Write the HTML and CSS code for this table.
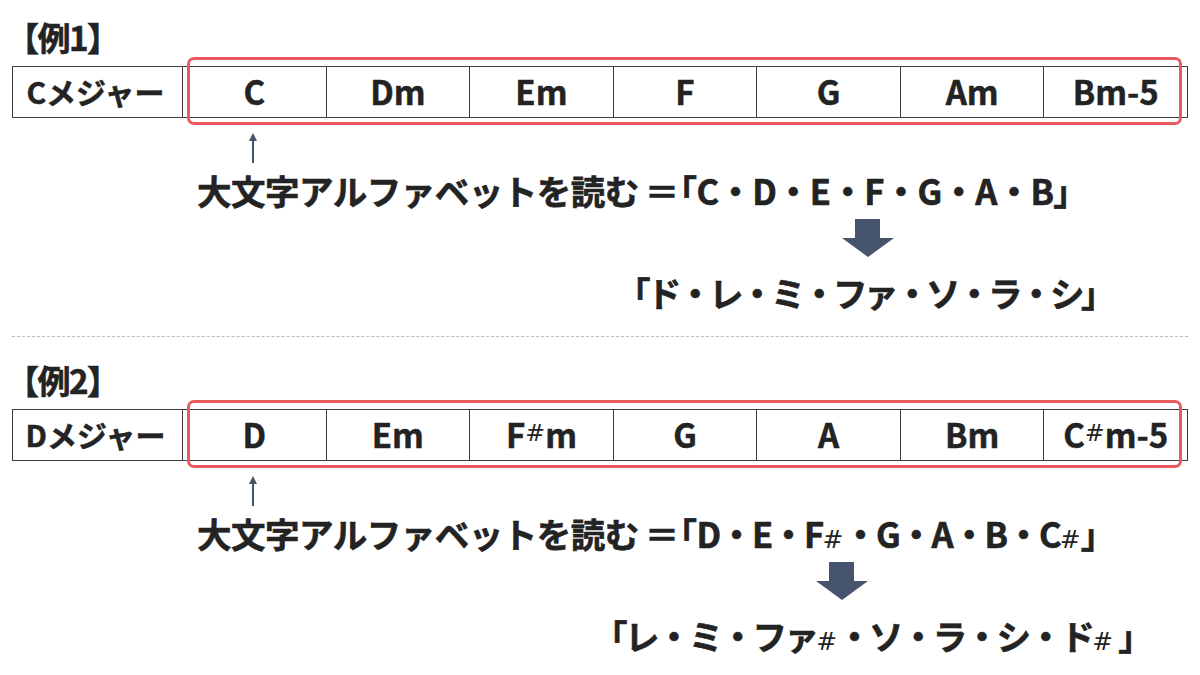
FILE: index.html
```html
<!DOCTYPE html>
<html lang="ja">
<head>
<meta charset="utf-8">
<title>コード譜の読み方</title>
<link rel="stylesheet" href="styles.css">
</head>
<body>
<div class="page">
  <section class="example">
    <h2 class="title">【例1】</h2>
    <div class="scale">
      <div class="cell key">Cメジャー</div>
      <div class="cell">C</div>
      <div class="cell">Dm</div>
      <div class="cell">Em</div>
      <div class="cell">F</div>
      <div class="cell">G</div>
      <div class="cell">Am</div>
      <div class="cell">Bm-5</div>
      <div class="highlight"></div>
    </div>
    <div class="pointer">
      <svg width="12" height="30" viewBox="0 0 12 30"><line x1="6" y1="6" x2="6" y2="30" stroke="#44546a" stroke-width="2"/><polygon points="2,8 6,0 10,8" fill="#44546a"/></svg>
    </div>
    <p class="rule"><span class="words">大文字アルファベットを読む</span><span class="eq">＝</span><span class="open">「</span><span class="notes">C・D・E・F・G・A・B」</span></p>
    <div class="down down-1">
      <svg width="52" height="38" viewBox="0 0 52 38"><polygon points="13,0 38,0 38,19 52,19 26,38 0,19 13,19" fill="#46556d"/></svg>
    </div>
    <p class="result result-1">「ド・レ・ミ・ファ・ソ・ラ・シ」</p>
  </section>

  <hr class="divider">

  <section class="example">
    <h2 class="title">【例2】</h2>
    <div class="scale">
      <div class="cell key">Dメジャー</div>
      <div class="cell">D</div>
      <div class="cell">Em</div>
      <div class="cell">F<span class="sharp">#</span>m</div>
      <div class="cell">G</div>
      <div class="cell">A</div>
      <div class="cell">Bm</div>
      <div class="cell">C<span class="sharp">#</span>m-5</div>
      <div class="highlight"></div>
    </div>
    <div class="pointer">
      <svg width="12" height="30" viewBox="0 0 12 30"><line x1="6" y1="6" x2="6" y2="30" stroke="#44546a" stroke-width="2"/><polygon points="2,8 6,0 10,8" fill="#44546a"/></svg>
    </div>
    <p class="rule"><span class="words">大文字アルファベットを読む</span><span class="eq">＝</span><span class="open">「</span><span class="notes notes-sharp">D・E・F<span class="sharp">#</span>・G・A・B・C<span class="sharp">#</span>」</span></p>
    <div class="down down-2">
      <svg width="52" height="38" viewBox="0 0 52 38"><polygon points="13,0 38,0 38,19 52,19 26,38 0,19 13,19" fill="#46556d"/></svg>
    </div>
    <p class="result result-2">「レ・ミ・ファ<span class="sharp">#</span>・ソ・ラ・シ・ド<span class="sharp">#</span> 」</p>
  </section>
</div>
</body>
</html>
```

FILE: styles.css
```css
* { box-sizing: border-box; }

html, body {
  margin: 0;
  padding: 0;
  background: #ffffff;
}

body {
  font-family: "Noto Sans CJK JP", "Noto Sans", sans-serif;
  color: #232323;
  width: 1200px;
  height: 675px;
  overflow: hidden;
}

.page {
  padding: 17px 12px 0 12px;
}

.example {
  display: flex;
  flex-direction: column;
}

.title {
  margin: 0;
  font-size: 33px;
  font-weight: 700;
  line-height: 40px;
  height: 40px;
  margin-left: -6px;
  letter-spacing: -1.5px;
  -webkit-text-stroke: 0.6px #232323;
}

.scale {
  position: relative;
  margin-top: 9px;
  display: grid;
  grid-template-columns: 169px repeat(7, 1fr);
  height: 52px;
  border: 1.5px solid #3d3d3d;
}

.cell {
  display: flex;
  align-items: center;
  justify-content: center;
  font-size: 33px;
  font-weight: 700;
  line-height: 1;
  border-left: 1.5px solid #3d3d3d;
  padding-bottom: 2px;
  -webkit-text-stroke: 0.5px #232323;
}

.cell.key {
  border-left: none;
  font-size: 30px;
  padding-right: 4px;
}

.highlight {
  position: absolute;
  left: 174px;
  right: 5px;
  top: -10px;
  bottom: -8px;
  border: 3px solid #ea5a5d;
  border-radius: 7px;
  pointer-events: none;
}

.pointer {
  margin-top: 15px;
  padding-left: 235px;
  height: 30px;
  display: flex;
}

.rule {
  margin: 7px 0 0 0;
  padding-left: 185px;
  font-size: 34.5px;
  font-weight: 700;
  line-height: 40px;
  height: 40px;
  white-space: nowrap;
  -webkit-text-stroke: 0.6px #232323;
}

.words {
  letter-spacing: -0.5px;
}

.eq {
  display: inline-block;
  margin-left: 6px;
}

.open {
  font-feature-settings: "palt";
}

.notes {
  letter-spacing: -0.7px;
}

.notes-sharp {
  letter-spacing: -1.8px;
}

.down {
  margin-top: 9px;
  height: 38px;
  display: flex;
}

.down-1 { padding-left: 830px; }
.down-2 { padding-left: 804px; }

.result {
  margin: 15px 0 0 0;
  font-size: 34.5px;
  font-weight: 700;
  line-height: 40px;
  height: 40px;
  white-space: nowrap;
  -webkit-text-stroke: 0.6px #232323;
}

.result-1 { padding-left: 604px; letter-spacing: -3.5px; }
.result-2 { padding-left: 581px; letter-spacing: -2.6px; }

.sharp {
  font-family: "DejaVu Sans", sans-serif;
  font-weight: 400;
  font-size: 0.72em;
  -webkit-text-stroke: 0;
  letter-spacing: 0;
}

.divider {
  margin: 24px 0 23px 0;
  border: none;
  border-top: 1.5px dashed #b3bccb;
  height: 0;
}
```
